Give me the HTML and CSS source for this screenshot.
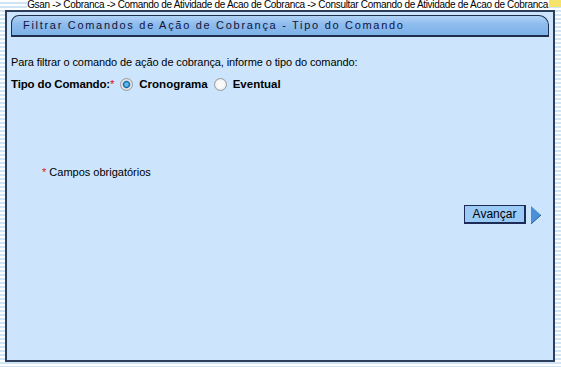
FILE: index.html
```html
<!DOCTYPE html>
<html lang="pt">
<head>
<meta charset="utf-8">
<link rel="stylesheet" href="styles.css">
</head>
<body>
<div class="crumbs"><span class="crumb-text">Gsan -&gt; Cobranca -&gt; Comando de Atividade de Acao de Cobranca -&gt; Consultar Comando de Atividade de Acao de Cobranca</span><span class="crumb-end"></span></div>
<div class="panel">
  <div class="head">Filtrar Comandos de Ação de Cobrança - Tipo do Comando</div>
  <p class="intro">Para filtrar o comando de ação de cobrança, informe o tipo do comando:</p>
  <div class="tipo">
    <span class="label">Tipo do Comando:<span class="req">*</span></span>
    <span class="radio on"></span><span class="opt">Cronograma</span>
    <span class="radio"></span><span class="opt">Eventual</span>
  </div>
  <p class="note"><span class="req">*</span> Campos obrigatórios</p>
  <div class="actions">
    <button class="btn" type="button">Avançar</button>
    <svg class="arrow" width="10" height="18" viewBox="0 0 10 18"><polygon points="0,0 10,9 0,18" fill="#4a90d9"/><polyline points="0,18 10,9" stroke="#2a5a9a" stroke-width="1" fill="none"/></svg>
  </div>
</div>
</body>
</html>
```
FILE: styles.css
```css
html, body { margin: 0; padding: 0; }
body {
  width: 561px;
  height: 367px;
  overflow: hidden;
  font-family: "Liberation Sans", Arial, sans-serif;
  background: repeating-linear-gradient(to bottom, #ffffff 0 2px, #cfe4f5 2px 4px);
}
.crumbs {
  height: 10px;
  display: flex;
  justify-content: flex-end;
  align-items: flex-start;
  font-size: 10px;
  line-height: 9px;
  color: #000;
  white-space: nowrap;
  overflow: hidden;
}
.crumb-text { background: #fff; padding-right: 1px; letter-spacing: -0.31px; }
.crumb-end { flex: none; width: 12px; height: 7px; background: #f5e36a; }
.panel {
  margin-left: 5px;
  width: 546px;
  height: 345px;
  border: 2px solid #2c3e5a;
  background: #cce5fd;
  padding: 3px 0 0 0;
}
.head {
  margin-left: 4px;
  width: 525px;
  height: 19px;
  border: 1px solid #1d2f4d;
  border-bottom-width: 2px;
  border-radius: 8px 10px 0 0;
  background: linear-gradient(to bottom, #b2d3f5 0%, #8fbdee 40%, #7eb1e8 100%);
  font-size: 11px;
  letter-spacing: 1.7px;
  color: #14143c;
  line-height: 19px;
  padding-left: 11px;
  box-sizing: content-box;
}
.intro {
  margin: 19px 0 0 4px;
  font-size: 11px;
  letter-spacing: -0.1px;
  line-height: 13px;
  color: #000;
}
.tipo {
  margin: 7px 0 0 4px;
  display: flex;
  align-items: center;
  font-size: 11.5px;
  font-weight: bold;
  color: #000;
  height: 16px;
}
.label { margin-right: 6px; letter-spacing: -0.15px; }
.req { color: #e01010; font-weight: normal; }
.radio {
  width: 11px;
  height: 11px;
  border-radius: 50%;
  border: 1px solid #9a9a9a;
  background: radial-gradient(circle, #fafafa 0 40%, #dcdcdc 100%);
  margin-right: 6px;
  box-sizing: content-box;
}
.radio.on {
  background: radial-gradient(circle, #60b8f0 0 20%, #1565a5 40%, #e8e8e8 55%, #d0d0d0 100%);
}
.opt { margin-right: 6px; }
.note {
  margin: 74px 0 0 35px;
  font-size: 11px;
  line-height: 13px;
  color: #000;
}
.actions {
  margin: 26px 0 0 0;
  display: flex;
  justify-content: flex-end;
  align-items: center;
  padding-right: 12px;
  gap: 5px;
}
.btn {
  width: 62px;
  height: 19px;
  font-family: "Liberation Sans", Arial, sans-serif;
  font-size: 12px;
  color: #000;
  background: #9ccaf7;
  border: 1px solid #1c2c56;
  border-right-width: 2px;
  border-bottom-width: 2px;
  padding: 0;
  line-height: 16px;
}
.arrow { display: block; }
```
